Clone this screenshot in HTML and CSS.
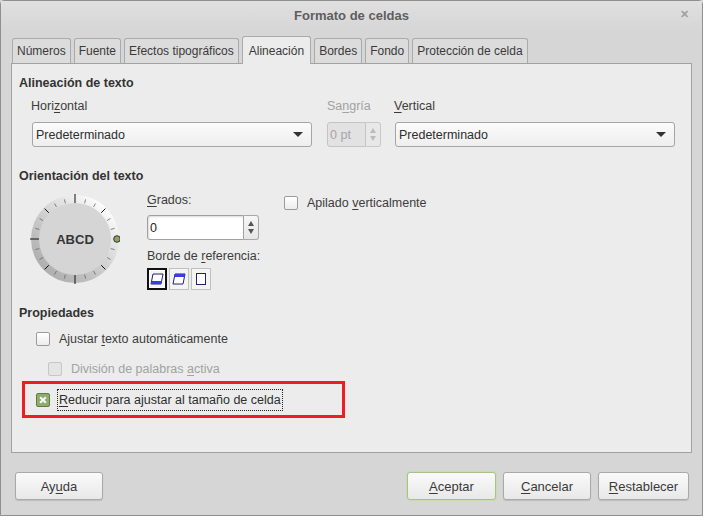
FILE: index.html
```html
<!DOCTYPE html>
<html lang="es">
<head>
    <meta charset="UTF-8">
    <title>Formato de celdas</title>
    <link rel="stylesheet" href="styles.css">
</head>
<body>
    <div class="window">
        <!-- barra de título -->
        <div class="titlebar">
            <span class="title">Formato de celdas</span>
            <span class="close">&#x2715;</span>
        </div>

        <!-- pestañas -->
        <div class="tabs">
            <div class="tab">Números</div>
            <div class="tab">Fuente</div>
            <div class="tab">Efectos tipográficos</div>
            <div class="tab active">Alineación</div>
            <div class="tab">Bordes</div>
            <div class="tab">Fondo</div>
            <div class="tab">Protección de celda</div>
        </div>

        <div class="panel">
            <div class="heading">Alineación de texto</div>
            <div class="align-row">
                <div class="field field-wide">
                    <div class="label">Hori<u>z</u>ontal</div>
                    <div class="combo"><span>Predeterminado</span><span class="arrow"></span></div>
                </div>
                <div class="field field-indent">
                    <div class="label disabled">Sa<u>n</u>gría</div>
                    <div class="spin spin-disabled">
                        <span class="spin-text">0 pt</span>
                        <span class="spin-btns"><i class="up"></i><i class="down"></i></span>
                    </div>
                </div>
                <div class="field field-wide">
                    <div class="label"><u>V</u>ertical</div>
                    <div class="combo"><span>Predeterminado</span><span class="arrow"></span></div>
                </div>
            </div>

            <div class="heading heading-orient">Orientación del texto</div>
            <div class="orient-row">
                <svg class="dial" width="90" height="90" viewBox="0 0 90 90">
                    <defs>
                        <linearGradient id="ring" x1="0.85" y1="0.1" x2="0.15" y2="0.9">
                            <stop offset="0" stop-color="#ffffff"/>
                            <stop offset="0.3" stop-color="#e2e2e2"/>
                            <stop offset="0.6" stop-color="#c9c9c9"/>
                            <stop offset="1" stop-color="#acacac"/>
                        </linearGradient>
                    </defs>
                    <circle cx="45" cy="45" r="44" fill="url(#ring)"/>
                    <circle cx="45" cy="45" r="36" fill="#d5d5d5"/>
                    <g stroke="#666" stroke-width="0.8">
                        <line x1="80.7" y1="35.4" x2="84.6" y2="34.4"/>
                        <line x1="77" y1="26.5" x2="80.5" y2="24.5"/>
                        <line x1="63.5" y1="13" x2="65.5" y2="9.5"/>
                        <line x1="54.6" y1="9.3" x2="55.6" y2="5.4"/>
                        <line x1="35.4" y1="9.3" x2="34.4" y2="5.4"/>
                        <line x1="26.5" y1="13" x2="24.5" y2="9.5"/>
                        <line x1="13" y1="26.5" x2="9.5" y2="24.5"/>
                        <line x1="9.3" y1="35.4" x2="5.4" y2="34.4"/>
                        <line x1="9.3" y1="54.6" x2="5.4" y2="55.6"/>
                        <line x1="13" y1="63.5" x2="9.5" y2="65.5"/>
                        <line x1="26.5" y1="77" x2="24.5" y2="80.5"/>
                        <line x1="35.4" y1="80.7" x2="34.4" y2="84.6"/>
                        <line x1="54.6" y1="80.7" x2="55.6" y2="84.6"/>
                        <line x1="63.5" y1="77" x2="65.5" y2="80.5"/>
                        <line x1="77" y1="63.5" x2="80.5" y2="65.5"/>
                        <line x1="80.7" y1="54.6" x2="84.6" y2="55.6"/>
                    </g>
                    <g stroke="#111" stroke-width="1">
                        <line x1="71.2" y1="18.8" x2="75.4" y2="14.6"/>
                        <line x1="18.8" y1="18.8" x2="14.6" y2="14.6"/>
                        <line x1="18.8" y1="71.2" x2="14.6" y2="75.4"/>
                        <line x1="71.2" y1="71.2" x2="75.4" y2="75.4"/>
                        <line x1="45" y1="9" x2="45" y2="0"/>
                        <line x1="45" y1="81" x2="45" y2="90"/>
                        <line x1="9" y1="45" x2="0" y2="45"/>
                    </g>
                    <circle cx="87" cy="45" r="3.3" fill="#8aa461" stroke="#333" stroke-width="1"/>
                    <text x="45" y="49.5" text-anchor="middle" class="dial-text">ABCD</text>
                </svg>

                <div class="degrees">
                    <div class="label"><u>G</u>rados:</div>
                    <div class="spin spin-deg">
                        <span class="spin-text">0</span>
                        <span class="spin-btns"><i class="up"></i><i class="down"></i></span>
                    </div>
                    <div class="label label-ref">Borde de <u>r</u>eferencia:</div>
                    <div class="ref-btns">
                        <div class="ref-btn selected">
                            <svg width="16" height="16" viewBox="0 0 16 16">
                                <polygon points="4,3 14,3 12,13 2,13" fill="#fff" stroke="#22226a" stroke-width="1"/>
                                <polygon points="2.6,10 12.6,10 12,13 2,13" fill="#3a3aee"/>
                            </svg>
                        </div>
                        <div class="ref-btn">
                            <svg width="16" height="16" viewBox="0 0 16 16">
                                <polygon points="4,3 14,3 12,13 2,13" fill="#fff" stroke="#22226a" stroke-width="1"/>
                                <polygon points="4,3 14,3 13.4,6 3.4,6" fill="#3a3aee"/>
                            </svg>
                        </div>
                        <div class="ref-btn">
                            <svg width="16" height="16" viewBox="0 0 16 16">
                                <rect x="3.5" y="2.5" width="9" height="11" fill="#fff" stroke="#22226a" stroke-width="1"/>
                            </svg>
                        </div>
                    </div>
                </div>

                <label class="check check-stack"><span class="box"></span><span>Apilado <u>v</u>erticalmente</span></label>
            </div>

            <div class="heading heading-props">Propiedades</div>
            <label class="check check-wrap"><span class="box"></span><span>Ajustar <u>t</u>exto automáticamente</span></label>
            <label class="check check-hyph disabled"><span class="box"></span><span>División de palabras <u>a</u>ctiva</span></label>
            <div class="highlight">
                <label class="check"><span class="box checked"></span><span class="focus"><u>R</u>educir para ajustar al tamaño de celda</span></label>
            </div>
        </div>

        <!-- botones -->
        <div class="buttons">
            <button class="btn">Ay<u>u</u>da</button>
            <span class="spacer"></span>
            <button class="btn default"><u>A</u>ceptar</button>
            <button class="btn"><u>C</u>ancelar</button>
            <button class="btn btn-reset"><u>R</u>establecer</button>
        </div>
    </div>
</body>
</html>
```

FILE: styles.css
```css
* {
    margin: 0;
    padding: 0;
    box-sizing: border-box;
}

body {
    font-family: 'Liberation Sans', Arial, sans-serif;
    font-size: 12.5px;
    color: #3c3c3c;
    background: #d6d6d6;
}

u {
    text-decoration: underline;
    text-underline-offset: 2px;
}

/* ventana */
.window {
    width: 703px;
    height: 516px;
    border: 1px solid #8f8f8f;
    border-radius: 4px 4px 0 0;
    background: #d6d6d6;
    display: flex;
    flex-direction: column;
}

.titlebar {
    position: relative;
    height: 29px;
    display: flex;
    align-items: center;
    justify-content: center;
    background: linear-gradient(#e0e0e0, #d6d6d6);
}

.title {
    font-weight: bold;
    font-size: 13px;
    color: #5e5e5e;
}

.close {
    position: absolute;
    right: 13px;
    top: 7px;
    font-size: 11px;
    font-weight: bold;
    color: #a0a0a0;
}

/* pestañas */
.tabs {
    display: flex;
    align-items: flex-end;
    height: 33px;
    padding-left: 11px;
}

.tab {
    height: 25px;
    margin-right: 3px;
    padding: 0 4px;
    display: flex;
    align-items: center;
    font-size: 12px;
    border: 1px solid #aaaaaa;
    border-bottom: none;
    border-radius: 3px 3px 0 0;
    background: #dcdcdc;
    color: #3a3a3a;
}

.tab.active {
    height: 28px;
    margin-bottom: -1px;
    padding: 0 6px;
    background: #ececec;
    position: relative;
    z-index: 1;
}

/* panel */
.panel {
    height: 390px;
    margin: 0 10px;
    padding: 11px 7px 0;
    border: 1px solid #a2a2a2;
    background: #ececec;
}

.heading {
    font-weight: bold;
    font-size: 12.5px;
    line-height: 16px;
    color: #333;
}

.label {
    line-height: 16px;
}

.disabled {
    color: #a2a2a2;
}

.align-row {
    display: flex;
    padding-left: 12px;
    margin-top: 7px;
}

.field .label {
    margin-bottom: 8px;
}

.field-wide {
    width: 281px;
}

.field-indent {
    margin: 0 13px 0 14px;
    padding-left: 1px;
}

.combo {
    margin-left: 1px;
    height: 25px;
    padding: 0 8px 0 3px;
    display: flex;
    align-items: center;
    justify-content: space-between;
    border: 1px solid #a5a5a5;
    border-radius: 3px;
    background: linear-gradient(#fbfbfb, #eeeeee);
    color: #2e2e2e;
}

.arrow {
    width: 0;
    height: 0;
    border-left: 5px solid transparent;
    border-right: 5px solid transparent;
    border-top: 5px solid #333;
}

.spin {
    display: flex;
    height: 25px;
}

.spin-text {
    flex: 1;
    display: flex;
    align-items: center;
    padding-left: 2px;
    border: 1px solid #a0a0a0;
    border-radius: 3px 0 0 3px;
    background: #fff;
    box-shadow: inset 1px 1px 2px rgba(0,0,0,0.15);
    color: #222;
}

.spin-btns {
    width: 15px;
    display: flex;
    flex-direction: column;
    align-items: center;
    justify-content: center;
    gap: 3px;
    border: 1px solid #a8a8a8;
    border-left: none;
    border-radius: 0 3px 3px 0;
    background: linear-gradient(#f6f6f6, #e6e6e6);
}

.spin-btns i {
    width: 0;
    height: 0;
    border-left: 3px solid transparent;
    border-right: 3px solid transparent;
}

.spin-btns .up {
    border-bottom: 5px solid #555;
}

.spin-btns .down {
    border-top: 5px solid #555;
}

.spin-disabled {
    width: 54px;
}

.spin-disabled .spin-text {
    background: #e2e2e2;
    border-color: #c4c4c4;
    box-shadow: none;
    color: #a5a5a5;
}

.spin-disabled .spin-btns {
    border-color: #c8c8c8;
    background: #e8e8e8;
}

.spin-disabled .spin-btns .up {
    border-bottom-color: #bbb;
}

.spin-disabled .spin-btns .down {
    border-top-color: #bbb;
}

/* orientación */
.heading-orient {
    margin-top: 21px;
}

.orient-row {
    display: flex;
    align-items: flex-start;
    margin-top: 8px;
}

.dial {
    margin: 2px 0 0 11px;
}

.dial-text {
    font-family: 'Liberation Sans', Arial, sans-serif;
    font-weight: bold;
    font-size: 13px;
    fill: #353535;
}

.degrees {
    width: 137px;
    margin-left: 27px;
}

.spin-deg {
    width: 112px;
    margin-top: 7px;
}

.label-ref {
    margin-top: 8px;
}

.ref-btns {
    display: flex;
    gap: 2px;
    margin-top: 4px;
}

.ref-btn {
    width: 20px;
    height: 22px;
    display: flex;
    align-items: center;
    justify-content: center;
    border: 1px solid #c0c0c0;
    background: #f4f4f4;
}

.ref-btn.selected {
    border: 2px solid #111;
    box-shadow: inset 0 0 0 1px #fff;
}

/* casillas */
.check {
    display: flex;
    align-items: center;
    height: 16px;
    line-height: 16px;
}

.box {
    width: 14px;
    height: 14px;
    margin-right: 9px;
    border: 1px solid #9a9a9a;
    border-radius: 2px;
    background: linear-gradient(#ffffff, #ececec);
}

.disabled .box {
    border-color: #c6c6c6;
    background: #e4e4e4;
}

.box.checked {
    position: relative;
    border-color: #5f7c45;
    background: #8fab6e;
}

.box.checked::before,
.box.checked::after {
    content: "";
    position: absolute;
    left: 2px;
    top: 5px;
    width: 8px;
    height: 2px;
    background: #fff;
    transform: rotate(45deg);
}

.box.checked::after {
    transform: rotate(-45deg);
}

.check-stack {
    margin: 3px 0 0 0;
}

.heading-props {
    margin-top: 15px;
}

.check-wrap {
    margin: 10px 0 0 17px;
}

.check-hyph {
    margin: 14px 0 0 29px;
}

.highlight {
    width: 323px;
    height: 37px;
    margin: 4px 0 0 3px;
    padding: 8px 0 0 11px;
    border: 3px solid #ee1c25;
}

.focus {
    padding: 1px 0;
    outline: 1px dotted #222;
    outline-offset: 1px;
    color: #2e2e2e;
}

/* botones inferiores */
.buttons {
    display: flex;
    gap: 7px;
    padding: 19px 13px 0 14px;
}

.spacer {
    flex: 1;
}

.btn {
    width: 88px;
    height: 28px;
    font-family: 'Liberation Sans', Arial, sans-serif;
    font-size: 13px;
    color: #3a3a3a;
    border: 1px solid #a9a9a9;
    border-radius: 3px;
    background: linear-gradient(#fafafa, #e8e8e8);
    box-shadow: 0 1px 1px rgba(0,0,0,0.12);
}

.btn.default {
    width: 89px;
    border-color: #a7c08c;
    box-shadow: 0 0 0 1px #c9dab6;
}

.btn-reset {
    width: 91px;
}
```
